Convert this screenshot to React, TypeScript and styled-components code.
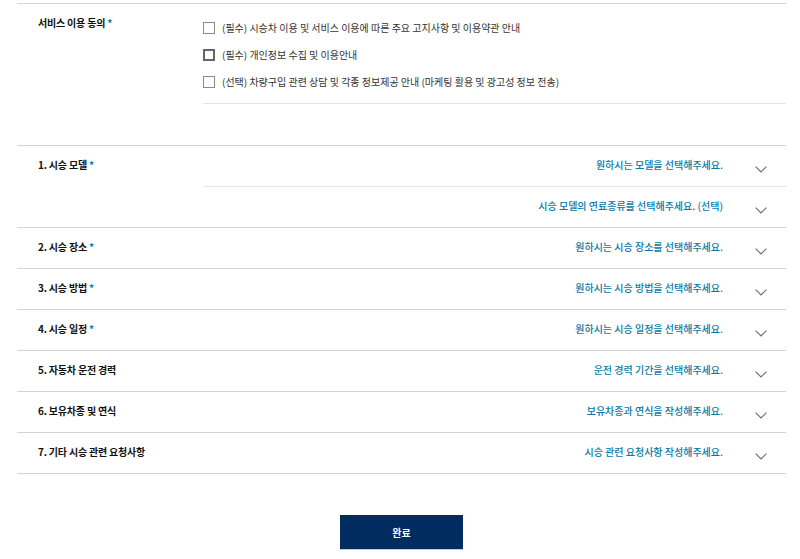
import React from "react";
import styled, { createGlobalStyle } from "styled-components";

const Global = createGlobalStyle`
  html, body { margin: 0; padding: 0; background: #fff; }
  body { font-family: "Noto Sans CJK KR", "Noto Sans", sans-serif; color: #111; }
  * { box-sizing: border-box; }
`;

const Page = styled.div`
  width: 800px;
  padding: 3px 14px 0 17px;
`;

const Form = styled.div`
  border-top: 1px solid #d4d4d4;
`;

const Row = styled.div<{ $padBottom?: number }>`
  display: grid;
  grid-template-columns: 186px 1fr;
  border-bottom: 1px solid #d4d4d4;
  padding-bottom: ${(p) => p.$padBottom ?? 0}px;
`;

const Label = styled.div<{ $top: number }>`
  padding: ${(p) => p.$top}px 0 0 21px;
  font-size: 10px;
  line-height: 14px;
  font-weight: 700;
  color: #111;
  letter-spacing: -0.2px;
`;

const Star = styled.span`
  color: #0a7ca8;
  margin-left: 2px;
  font-weight: 700;
`;

const CheckList = styled.div`
  padding: 10px 0 8px;
  border-bottom: 1px solid #e4e4e4;
`;

const CheckRow = styled.label`
  display: flex;
  align-items: center;
  height: 27px;
  font-size: 10px;
  color: #333;
  cursor: pointer;
`;

const Box = styled.span<{ $focus?: boolean }>`
  width: 12px;
  height: 12px;
  margin: 0 7px 0 0;
  border: ${(p) => (p.$focus ? "2px solid #666" : "1px solid #8a8a8a")};
  background: #fff;
  flex: none;
`;

const Fields = styled.div``;

const Field = styled.div<{ $divider?: boolean }>`
  height: ${(p) => (p.$divider ? 41 : 40)}px;
  display: flex;
  align-items: center;
  justify-content: flex-end;
  padding-right: 19px;
  border-bottom: ${(p) => (p.$divider ? "1px solid #e4e4e4" : "none")};
`;

const Value = styled.span`
  font-size: 10px;
  font-weight: 500;
  color: #0878a4;
  line-height: 14px;
  margin-top: -3px;
`;

const Chevron = styled.svg`
  width: 12px;
  height: 7px;
  margin-left: 32px;
  margin-top: 6px;
  flex: none;
`;

const Footer = styled.div`
  display: flex;
  justify-content: center;
  padding-top: 41px;
`;

const Submit = styled.button`
  width: 123px;
  height: 35px;
  border: none;
  border-bottom: 1px solid #b9cbe0;
  background: #002c5f;
  color: #fff;
  font-family: "Noto Sans CJK KR", sans-serif;
  font-size: 10px;
  font-weight: 700;
  cursor: pointer;
`;

const Down = () => (
  <Chevron viewBox="0 0 12 7" fill="none">
    <polyline points="0.6,0.6 6,6 11.4,0.6" stroke="#6f6f6f" strokeWidth="1.2" />
  </Chevron>
);

const rows: { label: string; req: boolean; values: string[] }[] = [
  { label: "1. 시승 모델", req: true, values: ["원하시는 모델을 선택해주세요.", "시승 모델의 연료종류를 선택해주세요. (선택)"] },
  { label: "2. 시승 장소", req: true, values: ["원하시는 시승 장소를 선택해주세요."] },
  { label: "3. 시승 방법", req: true, values: ["원하시는 시승 방법을 선택해주세요."] },
  { label: "4. 시승 일정", req: true, values: ["원하시는 시승 일정을 선택해주세요."] },
  { label: "5. 자동차 운전 경력", req: false, values: ["운전 경력 기간을 선택해주세요."] },
  { label: "6. 보유차종 및 연식", req: false, values: ["보유차종과 연식을 작성해주세요."] },
  { label: "7. 기타 시승 관련 요청사항", req: false, values: ["시승 관련 요청사항 작성해주세요."] },
];

const agreements = [
  "(필수) 시승차 이용 및 서비스 이용에 따른 주요 고지사항 및 이용약관 안내",
  "(필수) 개인정보 수집 및 이용안내",
  "(선택) 차량구입 관련 상담 및 각종 정보제공 안내 (마케팅 활용 및 광고성 정보 전송)",
];

export default function App() {
  return (
    <Page>
      <Global />
      <Form>
        <Row $padBottom={41}>
          <Label $top={12}>
            서비스 이용 동의<Star>*</Star>
          </Label>
          <CheckList>
            {agreements.map((a, i) => (
              <CheckRow key={a}>
                <Box $focus={i === 1} />
                {a}
              </CheckRow>
            ))}
          </CheckList>
        </Row>
        {rows.map((r) => (
          <Row key={r.label}>
            <Label $top={12}>
              {r.label}
              {r.req && <Star>*</Star>}
            </Label>
            <Fields>
              {r.values.map((v, i) => (
                <Field key={v} $divider={i < r.values.length - 1}>
                  <Value>{v}</Value>
                  <Down />
                </Field>
              ))}
            </Fields>
          </Row>
        ))}
      </Form>
      <Footer>
        <Submit>완료</Submit>
      </Footer>
    </Page>
  );
}
